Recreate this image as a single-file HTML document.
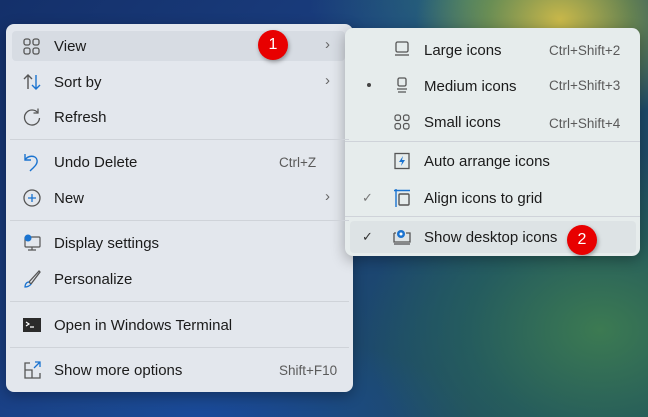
<!DOCTYPE html>
<html><head><meta charset="utf-8"><style>
*{margin:0;padding:0;box-sizing:border-box}
body{width:648px;height:417px;overflow:hidden;position:relative;font-family:"Liberation Sans",sans-serif;
background:
radial-gradient(ellipse 180px 140px at 560px 20px,#c9b84a 0%,rgba(150,170,60,.6) 40%,transparent 80%),
radial-gradient(ellipse 260px 200px at 600px 330px,#3c7a52 0%,rgba(40,100,90,.7) 50%,transparent 90%),
radial-gradient(ellipse 200px 120px at 470px 0px,#2a6a78 0%,transparent 80%),
radial-gradient(ellipse 300px 100px at 200px 417px,#1a4a9a 0%,transparent 90%),
linear-gradient(135deg,#14306a 0%,#1a3e80 40%,#1d4a6a 70%,#244c58 100%);}
.menu{position:absolute;border-radius:8px;box-shadow:0 4px 14px rgba(0,0,0,.3)}
.m1{left:6px;top:24px;width:347px;height:368px;background:#e3e7ed}
.m2{left:345px;top:28px;width:295px;height:228px;background:#e6ecec}
.row{position:absolute;height:30px;font-size:15px;color:#1b1b1b;line-height:30px}
.sc{position:absolute;font-size:13.5px;color:#5a5a5a}
.div{position:absolute;height:1px;background:#cfd3d9}
.ic{position:absolute}
.chev{position:absolute;color:#666;font-size:15px}
.badge{position:absolute;width:30px;height:30px;border-radius:50%;background:#e80000;color:#fff;font-size:16px;text-align:center;line-height:30px;box-shadow:1px 2px 4px rgba(0,0,0,.35)}
</style></head><body>
<div class="menu m1"></div>
<div style="position:absolute;left:12px;top:31px;width:333px;height:30px;background:#d7dce3;border-radius:4px"></div>
<div class="menu m2"></div>
<div style="position:absolute;left:350px;top:221px;width:286px;height:32px;background:#dde3e5;border-radius:4px"></div>

<svg class="ic" style="left:22px;top:37px" width="20" height="20" viewBox="0 0 20 20" fill="none" stroke="#555" stroke-width="1.3"><rect x="2" y="2" width="6" height="6" rx="2"/><rect x="11" y="2" width="6" height="6" rx="2"/><rect x="2" y="11" width="6" height="6" rx="2"/><rect x="11" y="11" width="6" height="6" rx="2"/></svg>
<svg class="ic" style="left:22px;top:72px" width="20" height="20" viewBox="0 0 20 20" fill="none" stroke-width="1.4"><path d="M6 17V3M2 7l4-4 4 4" stroke="#555"/><path d="M14 3v14M10 13l4 4 4-4" stroke="#1a73d0"/></svg>
<svg class="ic" style="left:22px;top:107px" width="20" height="20" viewBox="0 0 20 20" fill="none" stroke="#555" stroke-width="1.3"><path d="M16 6A7.5 7.5 0 1 0 17.5 11"/><path d="M16 1.5V6h-4.5"/></svg>
<svg class="ic" style="left:22px;top:152px" width="20" height="20" viewBox="0 0 20 20" fill="none" stroke="#1a73d0" stroke-width="1.4"><path d="M3 2v6h6"/><path d="M3 8C6 3 14 3 15 8c1 4-3 7-7 11"/></svg>
<svg class="ic" style="left:22px;top:188px" width="20" height="20" viewBox="0 0 20 20" fill="none" stroke-width="1.3"><circle cx="10" cy="10" r="8" stroke="#555"/><path d="M10 6v8M6 10h8" stroke="#1a73d0"/></svg>
<svg class="ic" style="left:22px;top:233px" width="20" height="20" viewBox="0 0 20 20" fill="none" stroke="#555" stroke-width="1.2"><rect x="3" y="4" width="15" height="10" rx="1"/><path d="M10 14v3M6 17h8"/><circle cx="6" cy="5" r="3.5" fill="#1a73d0" stroke="none"/></svg>
<svg class="ic" style="left:22px;top:269px" width="20" height="20" viewBox="0 0 20 20" fill="none" stroke-width="1.3"><path d="M17 2L7 13l2 2L18 3z" stroke="#555"/><path d="M7 13c-3 0-4 3-4 5 2 0 5-1 6-3" stroke="#1a73d0"/></svg>
<svg class="ic" style="left:22px;top:315px" width="20" height="20" viewBox="0 0 20 20"><rect x="1" y="3" width="18" height="14" fill="#2b2b2b"/><path d="M4 7l3 2-3 2M8 12h4" stroke="#fff" stroke-width="1.2" fill="none"/></svg>
<svg class="ic" style="left:22px;top:360px" width="20" height="20" viewBox="0 0 20 20" fill="none" stroke-width="1.3"><path d="M8 3H3v15h15v-5M3 10h7v8" stroke="#555"/><path d="M12 8l6-6M13 2h5v5" stroke="#1a73d0"/></svg>

<div class="row" style="left:54px;top:32px">View</div>
<div class="row" style="left:54px;top:68px">Sort by</div>
<div class="row" style="left:54px;top:103px">Refresh</div>
<div class="div" style="left:10px;top:139px;width:339px"></div>
<div class="row" style="left:54px;top:148px">Undo Delete</div>
<div class="sc" style="left:279px;top:155px">Ctrl+Z</div>
<div class="row" style="left:54px;top:184px">New</div>
<div class="div" style="left:10px;top:220px;width:339px"></div>
<div class="row" style="left:54px;top:229px">Display settings</div>
<div class="row" style="left:54px;top:265px">Personalize</div>
<div class="div" style="left:10px;top:301px;width:339px"></div>
<div class="row" style="left:54px;top:311px">Open in Windows Terminal</div>
<div class="div" style="left:10px;top:347px;width:339px"></div>
<div class="row" style="left:54px;top:356px">Show more options</div>
<div class="sc" style="left:279px;top:363px">Shift+F10</div>
<div class="chev" style="left:325px;top:36px">&#x203A;</div>
<div class="chev" style="left:325px;top:72px">&#x203A;</div>
<div class="chev" style="left:325px;top:188px">&#x203A;</div>

<svg class="ic" style="left:393px;top:40px" width="18" height="18" viewBox="0 0 18 18" fill="none" stroke="#555" stroke-width="1.3"><rect x="3" y="2" width="12" height="10" rx="1.5"/><path d="M2 15h14"/></svg>
<div class="ic" style="left:367px;top:83px;width:4px;height:4px;border-radius:50%;background:#444"></div>
<svg class="ic" style="left:393px;top:76px" width="18" height="18" viewBox="0 0 18 18" fill="none" stroke="#555" stroke-width="1.3"><rect x="5" y="2" width="8" height="8" rx="1.5"/><path d="M4 13h10M5 16h8"/></svg>
<svg class="ic" style="left:393px;top:113px" width="18" height="18" viewBox="0 0 18 18" fill="none" stroke="#555" stroke-width="1.2"><rect x="2" y="2" width="5.5" height="5.5" rx="2"/><rect x="10.5" y="2" width="5.5" height="5.5" rx="2"/><rect x="2" y="10.5" width="5.5" height="5.5" rx="2"/><rect x="10.5" y="10.5" width="5.5" height="5.5" rx="2"/></svg>
<svg class="ic" style="left:393px;top:152px" width="18" height="18" viewBox="0 0 18 18" fill="none"><rect x="2" y="1.5" width="14" height="15" stroke="#555" stroke-width="1.3"/><path d="M10 4L6 10h3l-1 4 4-6H9z" fill="#1a73d0"/></svg>
<svg class="ic" style="left:393px;top:189px" width="18" height="18" viewBox="0 0 18 18" fill="none" stroke-width="1.4"><path d="M1 1.5h16M3 0v18" stroke="#1a73d0"/><rect x="6" y="5" width="10" height="11" rx="1" stroke="#555"/></svg>
<svg class="ic" style="left:392px;top:228px" width="20" height="18" viewBox="0 0 20 18" fill="none" stroke="#555" stroke-width="1.3"><path d="M2 5h2M14 5h4v9H2V5"/><path d="M2 16h16"/><circle cx="9" cy="6" r="4" fill="#1a73d0" stroke="none"/><circle cx="9" cy="6" r="1.5" fill="#fff" stroke="none"/></svg>
<div class="ic" style="left:362px;top:190px;font-size:13px;color:#777">&#x2713;</div>
<div class="ic" style="left:362px;top:229px;font-size:13px;color:#333">&#x2713;</div>

<div class="row" style="left:424px;top:36px">Large icons</div>
<div class="sc" style="left:549px;top:43px">Ctrl+Shift+2</div>
<div class="row" style="left:424px;top:72px">Medium icons</div>
<div class="sc" style="left:549px;top:78px">Ctrl+Shift+3</div>
<div class="row" style="left:424px;top:108px">Small icons</div>
<div class="sc" style="left:549px;top:116px">Ctrl+Shift+4</div>
<div class="div" style="left:345px;top:141px;width:295px"></div>
<div class="row" style="left:424px;top:147px">Auto arrange icons</div>
<div class="row" style="left:424px;top:184px">Align icons to grid</div>
<div class="div" style="left:345px;top:216px;width:295px"></div>
<div class="row" style="left:424px;top:223px">Show desktop icons</div>

<div class="badge" style="left:258px;top:30px">1</div>
<div class="badge" style="left:567px;top:225px">2</div>
</body></html>
